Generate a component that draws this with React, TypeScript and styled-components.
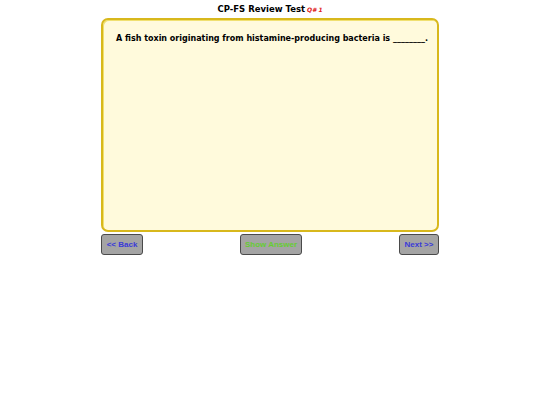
import React from 'react'
import styled, { createGlobalStyle } from 'styled-components'

const GlobalStyle = createGlobalStyle`
  *, *::before, *::after {
    box-sizing: border-box;
  }
  body {
    margin: 0;
    background: #ffffff;
    font-family: "DejaVu Sans", Verdana, sans-serif;
  }
`

const Page = styled.div`
  width: 338px;
  margin: 0 auto;
  display: flex;
  flex-direction: column;
`

const Title = styled.h1`
  margin: 0;
  padding: 4px 0 3px;
  text-align: center;
  font-size: 8.5px;
  font-weight: bold;
  color: #000;
  line-height: 11px;
`

const QNum = styled.span`
  color: #e02020;
  font-style: italic;
  font-size: 6px;
  margin-left: 2px;
`

const Card = styled.div`
  height: 214px;
  background: #fffadc;
  border: 2px solid #d8b81c;
  border-radius: 7px;
  box-shadow: inset 1px 1px 0 #f0e070;
  padding: 14px 4px 14px 13px;
`

const Question = styled.p`
  margin: 0;
  font-size: 8px;
  font-weight: bold;
  color: #000;
  white-space: nowrap;
`

const ButtonRow = styled.div`
  display: flex;
  justify-content: space-between;
  padding-top: 2px;
`

const NavButton = styled.button<{ $tone: 'blue' | 'green'; $w: number }>`
  width: ${p => p.$w}px;
  height: 21px;
  padding: 0;
  background: #a4a4a4;
  border: 1px solid #4a4a4a;
  border-radius: 3px;
  font-family: Arial, "Liberation Sans", sans-serif;
  font-size: 8px;
  font-weight: bold;
  color: ${p => (p.$tone === 'green' ? '#66cc33' : '#3a3ad8')};
`

export default function App() {
  return (
    <>
      <GlobalStyle />
      <Page>
        <Title>
          CP-FS Review Test<QNum>Q# 1</QNum>
        </Title>
        <Card>
          <Question>
            A fish toxin originating from histamine-producing bacteria is ________.
          </Question>
        </Card>
        <ButtonRow>
          <NavButton $tone="blue" $w={42}>&lt;&lt; Back</NavButton>
          <NavButton $tone="green" $w={62}>Show Answer</NavButton>
          <NavButton $tone="blue" $w={40}>Next &gt;&gt;</NavButton>
        </ButtonRow>
      </Page>
    </>
  )
}
